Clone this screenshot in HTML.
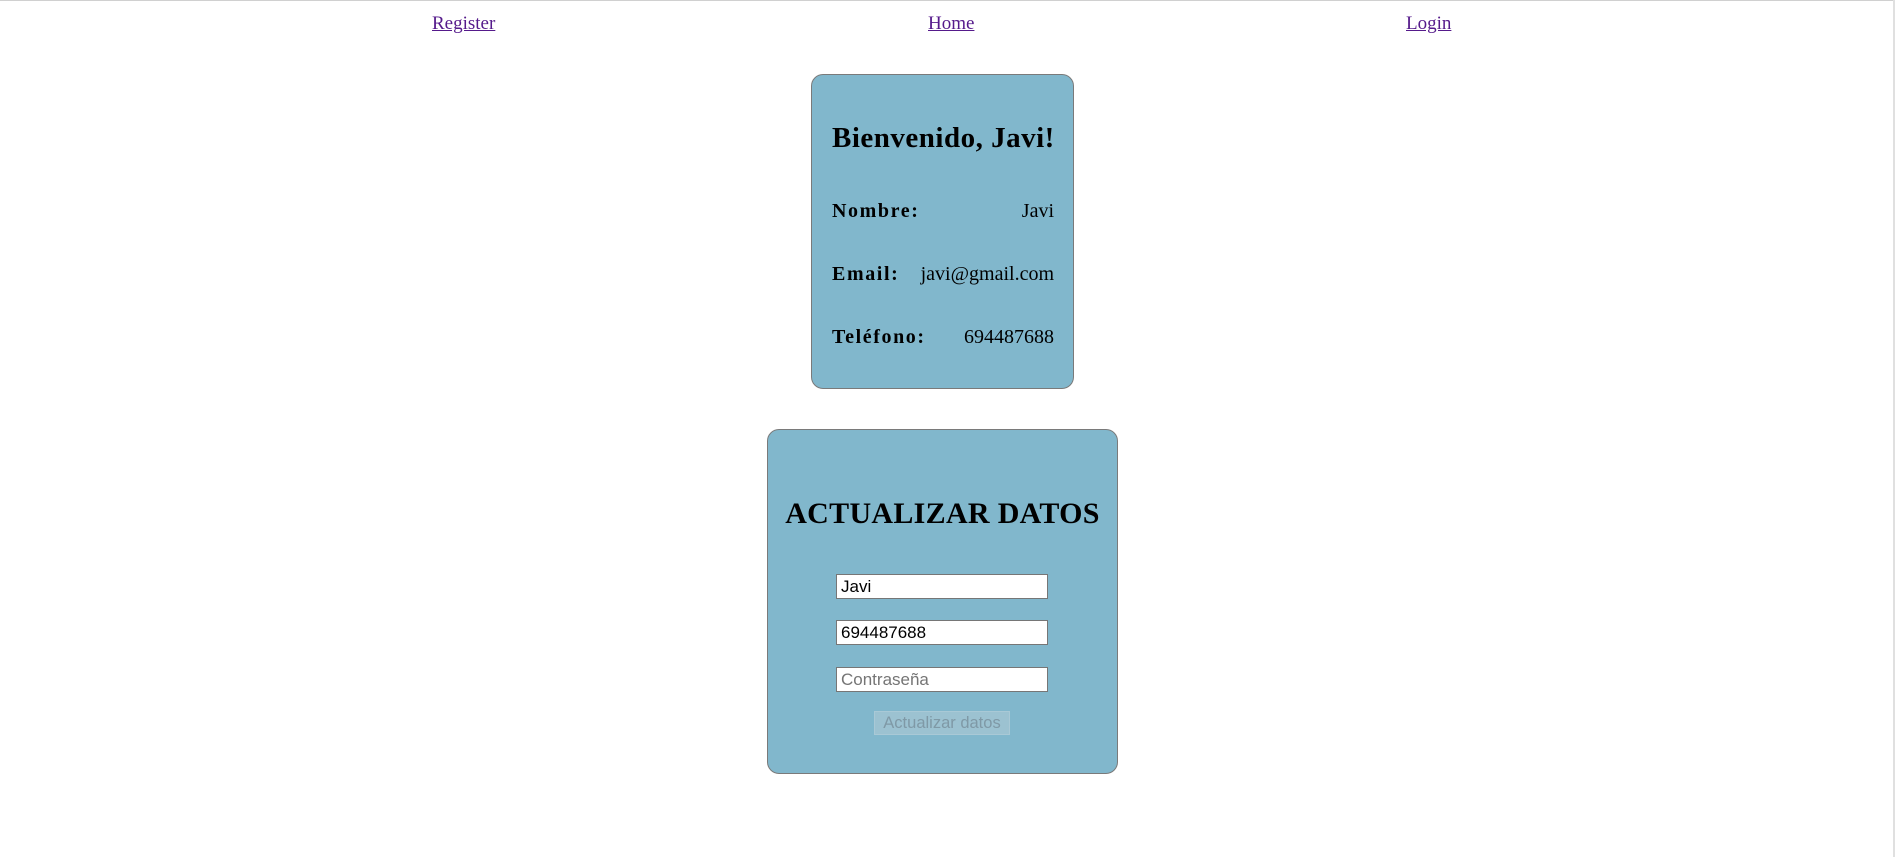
<!DOCTYPE html>
<html><head><meta charset="utf-8"><style>
html,body{margin:0;padding:0;width:1895px;height:857px;background:#fff;overflow:hidden;position:relative;font-family:"Liberation Serif",serif}
.top{position:absolute;left:0;top:0;width:1895px;height:1px;background:#d0d0d0}
.sb{position:absolute;right:0;top:0;width:2px;height:857px;background:#e0e0e0}
a{position:absolute;top:13px;font-size:19px;color:#551a8b;text-decoration:underline}
.card{position:absolute;background:#81b7cc;border:1px solid #7a7a7a;border-radius:12px;box-sizing:border-box}
.t{position:absolute;white-space:nowrap;color:#000}
.lb{font-size:20px;font-weight:bold;letter-spacing:1.6px}
.in{position:absolute;left:836px;width:212px;height:25px;box-sizing:border-box;background:#fff;border:1px solid #767676;font-family:"Liberation Sans",sans-serif;font-size:17px;line-height:23px;padding-left:4px;color:#000}
</style></head><body>
<div class="top"></div><div class="sb"></div>
<a style="left:432px">Register</a>
<a style="left:928px">Home</a>
<a style="left:1406px">Login</a>
<div class="card" style="left:811px;top:74px;width:263px;height:315px"></div>
<div class="t" style="left:832px;top:122px;font-size:29px;font-weight:bold;letter-spacing:0.5px">Bienvenido, Javi!</div>
<div class="t lb" style="left:832px;top:200px">Nombre:</div>
<div class="t" style="right:841px;top:200px;font-size:20px">Javi</div>
<div class="t lb" style="left:832px;top:263px">Email:</div>
<div class="t" style="right:841px;top:263px;font-size:20px">javi@gmail.com</div>
<div class="t lb" style="left:832px;top:326px">Teléfono:</div>
<div class="t" style="right:841px;top:326px;font-size:20px">694487688</div>
<div class="card" style="left:767px;top:429px;width:351px;height:345px"></div>
<div class="t" style="left:767px;width:351px;text-align:center;top:497px;font-size:30px;font-weight:bold;letter-spacing:0.3px">ACTUALIZAR DATOS</div>
<div class="in" style="top:574px">Javi</div>
<div class="in" style="top:620px">694487688</div>
<div class="in" style="top:667px;color:#757575">Contraseña</div>
<div style="position:absolute;left:874px;top:711px;width:136px;height:24px;box-sizing:border-box;background:#9cc2d1;border:1px solid #a9c9d6;font-family:'Liberation Sans',sans-serif;font-size:16.5px;line-height:22px;text-align:center;color:#7f99a6">Actualizar datos</div>
</body></html>
